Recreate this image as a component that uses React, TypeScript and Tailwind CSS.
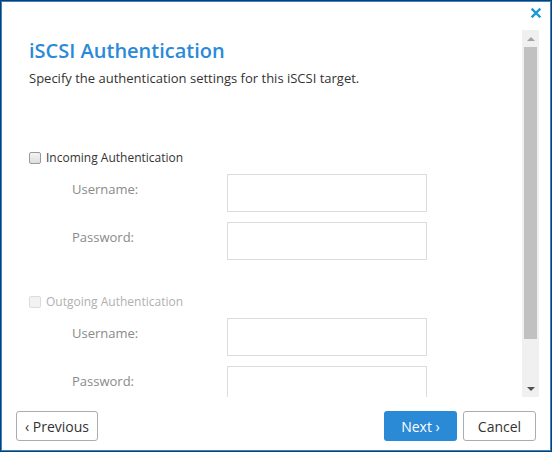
import React from "react";

function Field({ label }: { label: string }) {
  return (
    <div className="flex items-center h-[38px] mb-[10px]">
      <div className="w-[198px] pl-[43px] pb-[6px] text-[13px] text-[#8a8a8a]">{label}</div>
      <div className="w-[200px] h-[38px] border border-[#dcdcdc] bg-white" />
    </div>
  );
}

export default function App() {
  return (
    <div
      className="w-[552px] h-[452px] border border-[#1a3d5c] bg-white overflow-hidden"
      style={{ fontFamily: '"Open Sans", "Noto Sans", sans-serif' }}
    >
      <div className="w-full h-full border border-[#2b88d8] flex flex-col relative">
        <div className="absolute right-[9px] top-[6px] text-[#1a9ad6] text-[16px] font-bold leading-none">
          <svg width="10" height="10" viewBox="0 0 10 10">
            <path d="M1.5 1.5 L8.5 8.5 M8.5 1.5 L1.5 8.5" stroke="#1a9ad6" strokeWidth="2.4" strokeLinecap="square" />
          </svg>
        </div>
        <div className="flex mt-[28px] h-[367px]">
          <div className="flex-1 overflow-hidden pl-[27px]">
            <div className="pt-[8px] text-[20px] leading-[26px] text-[#2b8ad8] font-semibold">
              iSCSI Authentication
            </div>
            <div className="mt-[5px] text-[13px] leading-[18px] text-[#333]">
              Specify the authentication settings for this iSCSI target.
            </div>
            <div className="mt-[62px] flex items-center h-[18px]">
              <div className="w-[12px] h-[12px] rounded-[2px] border border-[#9a9a9a] bg-gradient-to-b from-[#f4f4f4] to-[#dedede]" />
              <span className="ml-[5px] text-[12px] text-[#333]">Incoming Authentication</span>
            </div>
            <div className="mt-[7px]">
              <Field label="Username:" />
              <Field label="Password:" />
            </div>
            <div className="mt-[33px] flex items-center h-[18px]">
              <div className="w-[12px] h-[12px] rounded-[2px] border border-[#dcdcdc] bg-[#f2f2f2]" />
              <span className="ml-[5px] text-[12px] text-[#b0b0b0]">Outgoing Authentication</span>
            </div>
            <div className="mt-[7px]">
              <Field label="Username:" />
              <Field label="Password:" />
            </div>
          </div>
          <div className="w-[17px] mr-[11px] bg-[#f0f0f0] flex flex-col items-center">
            <div className="h-[17px] flex items-center justify-center">
              <svg width="8" height="4" viewBox="0 0 8 4">
                <path d="M0 4 L4 0 L8 4 Z" fill="#a3a3a3" />
              </svg>
            </div>
            <div className="w-[13px] h-[292px] bg-[#c1c1c1]" />
            <div className="flex-1" />
            <div className="h-[17px] flex items-center justify-center">
              <svg width="8" height="4" viewBox="0 0 8 4">
                <path d="M0 0 L8 0 L4 4 Z" fill="#505050" />
              </svg>
            </div>
          </div>
        </div>
        <div className="flex items-center mt-[14px] px-[14px] h-[30px]">
          <button className="h-[30px] w-[82px] border border-[#acacac] rounded-[3px] bg-white text-[14px] text-[#333]">
            ‹ Previous
          </button>
          <div className="flex-1" />
          <button className="h-[30px] w-[73px] rounded-[3px] bg-[#2a8ad6] text-[14px] text-white">
            Next ›
          </button>
          <button className="ml-[6px] h-[30px] w-[73px] border border-[#acacac] rounded-[3px] bg-white text-[14px] text-[#333]">
            Cancel
          </button>
        </div>
      </div>
    </div>
  );
}
